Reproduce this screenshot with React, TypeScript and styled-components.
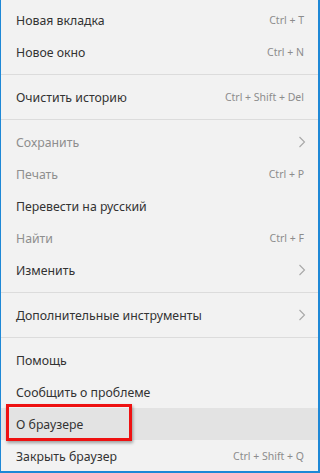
import styled, { createGlobalStyle } from "styled-components";

const GlobalStyle = createGlobalStyle`
  html, body {
    margin: 0;
    padding: 0;
    background: #f2f2f2;
  }
`;

const Menu = styled.div`
  position: relative;
  box-sizing: border-box;
  width: 320px;
  height: 473px;
  background: #f2f2f2;
  border-left: 1px solid #1e88d6;
  border-right: 2px solid #1e88d6;
  border-bottom: 2px solid #1e88d6;
  padding-top: 4px;
  font-family: "Noto Sans", "Open Sans", sans-serif;
  overflow: hidden;
`;

const Item = styled.div<{ $disabled?: boolean; $active?: boolean }>`
  display: flex;
  align-items: center;
  justify-content: space-between;
  height: 32px;
  padding: 0 12px 0 15px;
  font-size: 12.3px;
  color: ${(p) => (p.$disabled ? "#8e8e8e" : "#333333")};
  background: ${(p) => (p.$active ? "#e3e3e3" : "transparent")};
`;

const Shortcut = styled.span`
  font-size: 10.5px;
  color: #8c8c8c;
  padding-right: 2px;
`;

const Separator = styled.div`
  height: 1px;
  margin: 6px 0;
  background: #dcdcdc;
`;

const Highlight = styled.div`
  position: absolute;
  left: 5px;
  top: 404px;
  width: 126px;
  height: 37px;
  box-sizing: border-box;
  border: 3px solid #ee1111;
  box-shadow: 1px 2px 3px rgba(0, 0, 0, 0.35);
`;

const Chevron = () => (
  <svg width="8" height="12" viewBox="0 0 8 12">
    <path d="M1.5 1 L6.5 6 L1.5 11" fill="none" stroke="#a8a8a8" strokeWidth="1.1" />
  </svg>
);

type Row = { label: string; key?: string; sub?: boolean; disabled?: boolean; active?: boolean } | "sep";

const rows: Row[] = [
  { label: "Новая вкладка", key: "Ctrl + T" },
  { label: "Новое окно", key: "Ctrl + N" },
  "sep",
  { label: "Очистить историю", key: "Ctrl + Shift + Del" },
  "sep",
  { label: "Сохранить", sub: true, disabled: true },
  { label: "Печать", key: "Ctrl + P", disabled: true },
  { label: "Перевести на русский" },
  { label: "Найти", key: "Ctrl + F", disabled: true },
  { label: "Изменить", sub: true },
  "sep",
  { label: "Дополнительные инструменты", sub: true },
  "sep",
  { label: "Помощь" },
  { label: "Сообщить о проблеме" },
  { label: "О браузере", active: true },
  { label: "Закрыть браузер", key: "Ctrl + Shift + Q" },
];

export default function App() {
  return (
    <>
      <GlobalStyle />
      <Menu>
        {rows.map((r, i) =>
          r === "sep" ? (
            <Separator key={i} />
          ) : (
            <Item key={i} $disabled={r.disabled} $active={r.active}>
              <span>{r.label}</span>
              {r.key && <Shortcut>{r.key}</Shortcut>}
              {r.sub && <Chevron />}
            </Item>
          )
        )}
        <Highlight />
      </Menu>
    </>
  );
}
